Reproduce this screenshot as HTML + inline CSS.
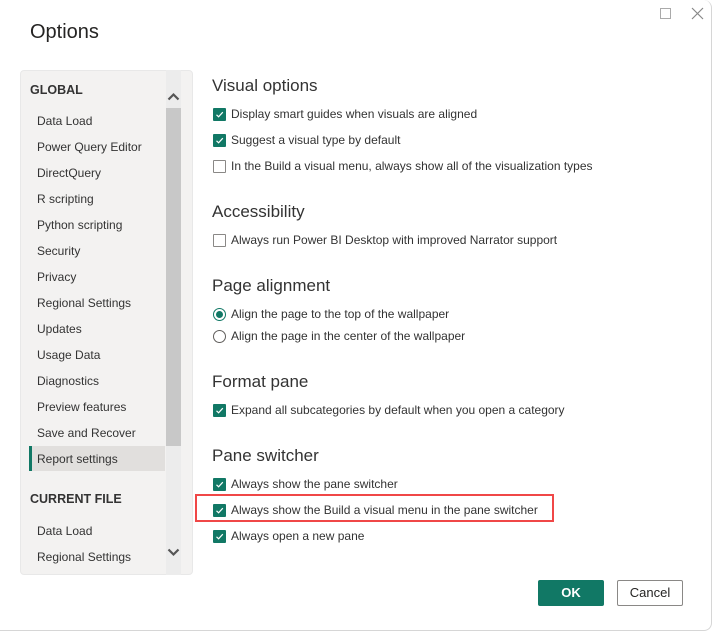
<!DOCTYPE html>
<html><head><meta charset="utf-8"><style>
*{margin:0;padding:0;box-sizing:border-box}
body{width:713px;height:632px;background:#fff;font-family:"Liberation Sans",sans-serif;color:#252423;position:relative;overflow:hidden}
.dlg{position:absolute;left:0;top:0;width:712px;height:631px;border:1px solid #d6d6d6;border-radius:0 8px 8px 0;border-left:none;border-top:none}
.abs{position:absolute;white-space:nowrap}
.title{left:30px;top:21px;font-size:20px;color:#252423}
.side{position:absolute;left:20px;top:70px;width:173px;height:505px;background:#f3f2f1;border:1px solid #e8e8e8;border-radius:4px}
.track{position:absolute;left:166px;top:70px;width:15px;height:505px;background:#ececec}
.thumb{position:absolute;left:166px;top:108px;width:15px;height:338px;background:#c8c8c8}
.sh{font-size:12.5px;font-weight:bold;color:#333;left:30px}
.si{font-size:12px;color:#333;left:37px}
.sel{position:absolute;left:29px;top:446px;width:136px;height:25px;background:#e1dfdd;border-left:3px solid #117865}
.h{font-size:17px;left:212px;color:#333}
.o{font-size:12px;left:231px;color:#333}
.cb{position:absolute;left:213px;width:13px;height:13px;background:#117865;border-radius:1px}
.cb.off{background:#fff;border:1px solid #8a8886}
.cb svg{position:absolute;left:2px;top:2px}
.rd{position:absolute;left:213px;width:13px;height:13px;border:1px solid #605e5c;border-radius:50%;background:#fff}
.rd.on{border-color:#117865}
.rd.on::after{content:"";position:absolute;left:2px;top:2px;width:7px;height:7px;border-radius:50%;background:#117865}
.red{position:absolute;left:195px;top:494px;width:359px;height:28px;border:2px solid #f04747}
.btn{position:absolute;top:580px;height:26px;font-size:13px;text-align:center;line-height:24px;border-radius:2px}
</style></head><body>
<div class="dlg"></div>
<div class="abs title">Options</div>
<div class="abs" style="left:660px;top:8px;width:11px;height:11px;border:1px solid #aaa"></div>
<svg class="abs" style="left:691px;top:7px" width="13" height="13"><path d="M1 1L12 12M12 1L1 12" stroke="#888" stroke-width="1.2"/></svg>

<div class="side"></div>
<div class="track"></div>
<div class="thumb"></div>
<svg class="abs" style="left:167px;top:92px" width="13" height="9"><path d="M1.5 7.5L6.5 2.5L11.5 7.5" stroke="#555" stroke-width="2.2" fill="none"/></svg>
<svg class="abs" style="left:167px;top:548px" width="13" height="9"><path d="M1.5 1.5L6.5 6.5L11.5 1.5" stroke="#555" stroke-width="2.2" fill="none"/></svg>
<div class="sel"></div>
<div class="abs sh" style="top:83px">GLOBAL</div>
<div class="abs si" style="top:114px">Data Load</div>
<div class="abs si" style="top:140px">Power Query Editor</div>
<div class="abs si" style="top:166px">DirectQuery</div>
<div class="abs si" style="top:192px">R scripting</div>
<div class="abs si" style="top:218px">Python scripting</div>
<div class="abs si" style="top:244px">Security</div>
<div class="abs si" style="top:270px">Privacy</div>
<div class="abs si" style="top:296px">Regional Settings</div>
<div class="abs si" style="top:322px">Updates</div>
<div class="abs si" style="top:348px">Usage Data</div>
<div class="abs si" style="top:374px">Diagnostics</div>
<div class="abs si" style="top:400px">Preview features</div>
<div class="abs si" style="top:426px">Save and Recover</div>
<div class="abs si" style="top:452px">Report settings</div>
<div class="abs sh" style="top:492px">CURRENT FILE</div>
<div class="abs si" style="top:524px">Data Load</div>
<div class="abs si" style="top:550px">Regional Settings</div>

<div class="abs h" style="top:76px">Visual options</div>
<div class="cb" style="top:108px"><svg width="9" height="9"><path d="M1.5 4.8L3.6 6.8L7.8 2.2" stroke="#fff" stroke-width="1.2" fill="none"/></svg></div>
<div class="abs o" style="top:107px">Display smart guides when visuals are aligned</div>
<div class="cb" style="top:134px"><svg width="9" height="9"><path d="M1.5 4.8L3.6 6.8L7.8 2.2" stroke="#fff" stroke-width="1.2" fill="none"/></svg></div>
<div class="abs o" style="top:133px">Suggest a visual type by default</div>
<div class="cb off" style="top:160px"></div>
<div class="abs o" style="top:159px">In the Build a visual menu, always show all of the visualization types</div>

<div class="abs h" style="top:202px">Accessibility</div>
<div class="cb off" style="top:234px"></div>
<div class="abs o" style="top:233px">Always run Power BI Desktop with improved Narrator support</div>

<div class="abs h" style="top:276px">Page alignment</div>
<div class="rd on" style="top:308px"></div>
<div class="abs o" style="top:307px">Align the page to the top of the wallpaper</div>
<div class="rd" style="top:330px"></div>
<div class="abs o" style="top:329px">Align the page in the center of the wallpaper</div>

<div class="abs h" style="top:372px">Format pane</div>
<div class="cb" style="top:404px"><svg width="9" height="9"><path d="M1.5 4.8L3.6 6.8L7.8 2.2" stroke="#fff" stroke-width="1.2" fill="none"/></svg></div>
<div class="abs o" style="top:403px">Expand all subcategories by default when you open a category</div>

<div class="abs h" style="top:446px">Pane switcher</div>
<div class="cb" style="top:478px"><svg width="9" height="9"><path d="M1.5 4.8L3.6 6.8L7.8 2.2" stroke="#fff" stroke-width="1.2" fill="none"/></svg></div>
<div class="abs o" style="top:477px">Always show the pane switcher</div>
<div class="red"></div>
<div class="cb" style="top:504px"><svg width="9" height="9"><path d="M1.5 4.8L3.6 6.8L7.8 2.2" stroke="#fff" stroke-width="1.2" fill="none"/></svg></div>
<div class="abs o" style="top:503px">Always show the Build a visual menu in the pane switcher</div>
<div class="cb" style="top:530px"><svg width="9" height="9"><path d="M1.5 4.8L3.6 6.8L7.8 2.2" stroke="#fff" stroke-width="1.2" fill="none"/></svg></div>
<div class="abs o" style="top:529px">Always open a new pane</div>

<div class="btn" style="left:538px;width:66px;background:#117865;color:#fff;font-weight:bold;border:1px solid #117865">OK</div>
<div class="btn" style="left:617px;width:66px;background:#fff;color:#252423;border:1px solid #8a8886">Cancel</div>
</body></html>
